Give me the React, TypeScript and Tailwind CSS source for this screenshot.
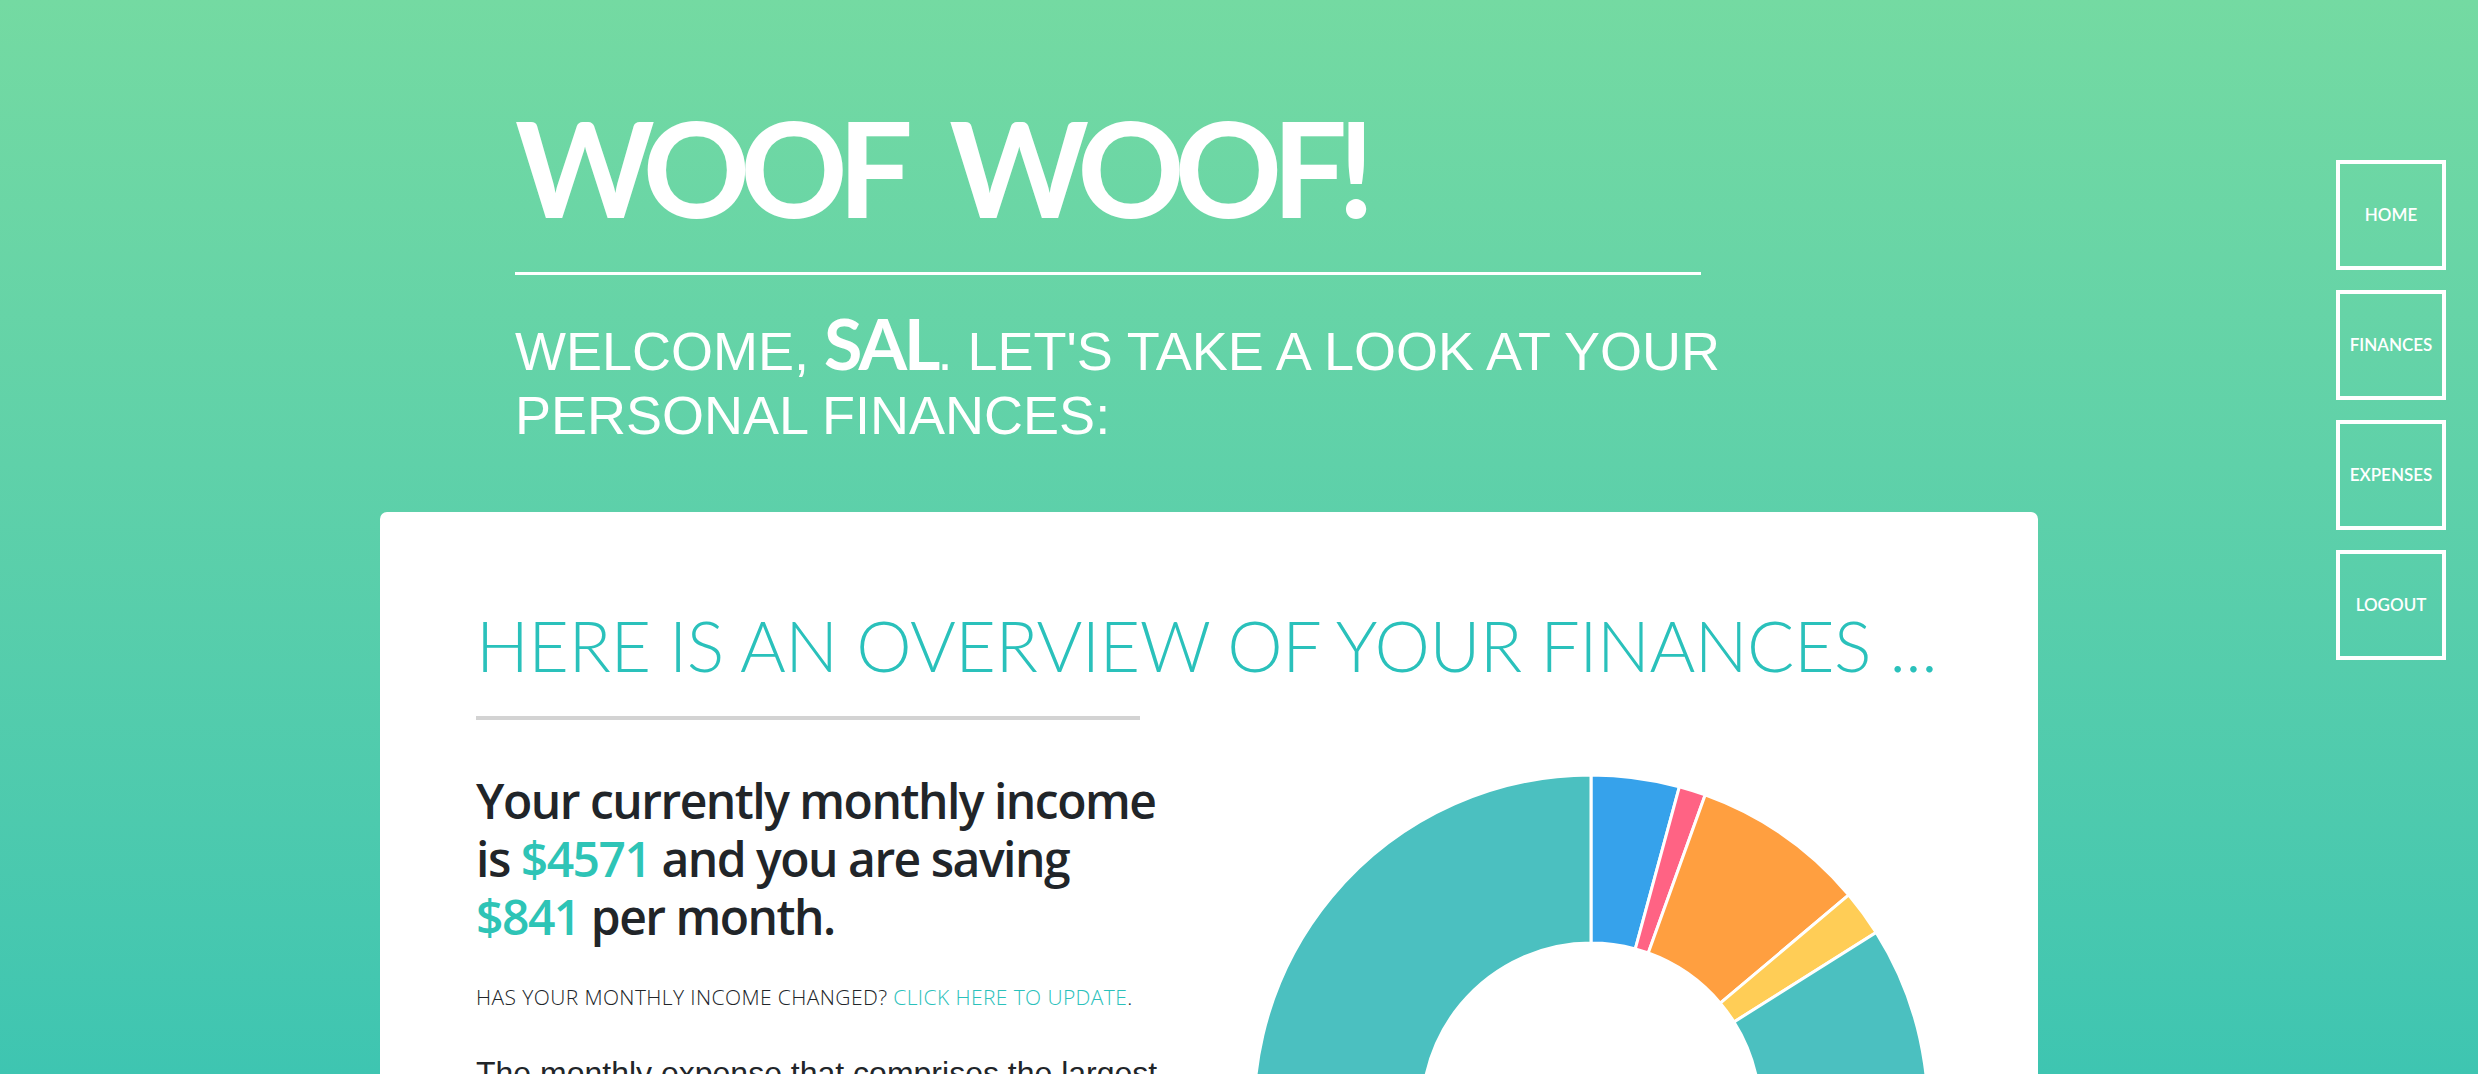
const navItems = ['HOME', 'FINANCES', 'EXPENSES', 'LOGOUT']

// chart slices, angles in degrees clockwise from 12 o'clock
const slices = [
  { color: '#36a2eb', from: 0, to: 15.2 },
  { color: '#ff6384', from: 15.2, to: 19.8 },
  { color: '#ff9f40', from: 19.8, to: 49.9 },
  { color: '#ffcd56', from: 49.9, to: 57.8 },
  { color: '#4bc0c0', from: 57.8, to: 360 },
]

function slicePath(from: number, to: number, cx: number, cy: number, R: number, r: number) {
  const pt = (a: number, rad: number) => {
    const t = ((a - 90) * Math.PI) / 180
    return `${(cx + rad * Math.cos(t)).toFixed(2)} ${(cy + rad * Math.sin(t)).toFixed(2)}`
  }
  const large = to - from > 180 ? 1 : 0
  return `M ${pt(from, R)} A ${R} ${R} 0 ${large} 1 ${pt(to - 0.001, R)} L ${pt(to - 0.001, r)} A ${r} ${r} 0 ${large} 0 ${pt(from, r)} Z`
}

function Donut() {
  return (
    <svg width="680" height="680" viewBox="0 0 680 680" className="shrink-0">
      {slices.map((s, i) => (
        <path key={i} d={slicePath(s.from, s.to, 340, 340, 337, 169)} fill={s.color} stroke="#ffffff" strokeWidth="3" />
      ))}
    </svg>
  )
}

export default function App() {
  return (
    <div className="h-screen w-full overflow-hidden bg-gradient-to-b from-[#74daa2] to-[#3ec5b1] flex">
      {/* main column */}
      <main className="flex-1 pl-[380px] pt-[100px]">
        <header className="pl-[135px] text-white">
          <h1 className="font-['Lato',sans-serif] font-bold text-[133px] leading-none tracking-[-10px] [word-spacing:28px]">WOOF WOOF!</h1>
          <div className="mt-[39px] h-[3px] w-[1186px] bg-white" />
          <p className="mt-[44px] w-[1220px] font-['Liberation_Sans',Arial,sans-serif] text-[54px] leading-[64px]">
            WELCOME, <span className="font-['Lato',sans-serif] font-bold text-[70px] leading-[0] tracking-[-3px]">SAL</span>. LET'S TAKE A LOOK AT YOUR PERSONAL FINANCES:
          </p>
        </header>

        <section className="mt-[65px] w-[1658px] rounded-[7px] bg-white px-[96px] pt-[91px] pb-20">
          <h2 className="whitespace-nowrap font-['Lato',sans-serif] font-light text-[70px] leading-[84px] tracking-[-0.5px] text-[#2ac1bb]">
            HERE IS AN OVERVIEW OF YOUR FINANCES ...
          </h2>
          <div className="mt-[29px] h-1 w-[664px] bg-[#d3d3d3]" />

          <div className="mt-[52px] flex">
            <div className="w-[690px] shrink-0">
              <p className="font-['Open_Sans',sans-serif] font-semibold text-[48px] leading-[58px] tracking-[-1.5px] text-[#212529]">
                Your currently monthly income is <span className="text-[#2ec4b6]">$4571</span> and you are saving{' '}
                <span className="text-[#2ec4b6]">$841</span> per month.
              </p>
              <p className="mt-[36px] font-['Open_Sans',sans-serif] font-light text-[21px] leading-[31px] tracking-[0.4px] text-[#212529]">
                HAS YOUR MONTHLY INCOME CHANGED? <a className="text-[#2ac1bb]">CLICK HERE TO UPDATE</a>.
              </p>
              <p className="mt-[38px] font-['Liberation_Sans',Arial,sans-serif] text-[32px] leading-[44px] text-[#212529]">
                The monthly expense that comprises the largest portion of your income is your rent.
              </p>
            </div>
            <div className="ml-[85px]">
              <Donut />
            </div>
          </div>
        </section>
      </main>

      {/* side nav */}
      <nav className="pt-[160px] pr-[32px] flex flex-col gap-5">
        {navItems.map((item) => (
          <a
            key={item}
            className="w-[110px] h-[110px] border-4 border-white flex items-center justify-center text-white font-['Lato',sans-serif] font-semibold text-[17px]"
          >
            {item}
          </a>
        ))}
      </nav>
    </div>
  )
}
